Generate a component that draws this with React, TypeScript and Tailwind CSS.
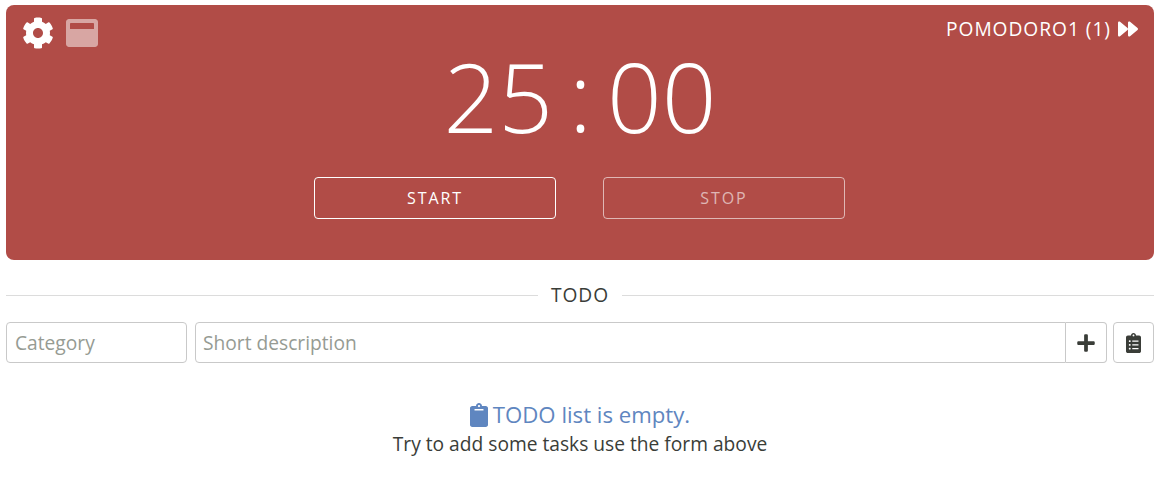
import { FaClipboard, FaClipboardList, FaCog, FaForward, FaPlus, FaWindowMaximize } from "react-icons/fa";

export default function App() {
  return (
    <div className="w-[1160px] h-[484px] bg-white px-[6px] pt-[5px] overflow-hidden font-['Open_Sans',sans-serif] text-[#3a3d38]">
      {/* Timer panel */}
      <div className="h-[255px] rounded-[8px] bg-[#b14c47] text-white px-4 pt-3">
        <div className="flex items-start justify-between h-[36px]">
          <div className="flex items-center gap-[12px]">
            <FaCog className="w-[32px] h-[32px]" />
            <FaWindowMaximize className="w-[32px] h-[32px] opacity-50" />
          </div>
          <div className="flex items-center gap-[7px] text-[19.2px] tracking-[0.96px] leading-[24px]">
            <span>POMODORO1 (1)</span>
            <FaForward className="w-[20px] h-[20px]" />
          </div>
        </div>
        <div className="flex justify-center items-center h-[100px] mt-[-7px] text-[96px] font-light leading-none">
          <span>25</span>
          <span className="ml-[16px] mr-[15px] relative top-[-1px]">:</span>
          <span>00</span>
        </div>
        <div className="flex justify-center gap-[47px] mt-[31px] pr-[1px]">
          <button className="w-[242px] h-[42px] rounded-[4px] border border-white text-[16px] tracking-[1.9px]">
            START
          </button>
          <button className="w-[242px] h-[42px] rounded-[4px] border border-white/60 text-white/60 text-[16px] tracking-[1.9px]">
            STOP
          </button>
        </div>
      </div>

      {/* Divider */}
      <div className="flex items-center gap-[13px] mt-[23px] h-[24px]">
        <div className="flex-1 h-px bg-[#dcdcdc]" />
        <span className="text-[19.2px] tracking-[0.96px] leading-[24px]">TODO</span>
        <div className="flex-1 h-px bg-[#dcdcdc]" />
      </div>

      {/* Form */}
      <div className="flex mt-[15px] h-[41px] text-[19.2px]">
        <input
          placeholder="Category"
          className="w-[181px] h-full rounded-[4px] border border-[#c9c9c9] px-2 outline-none placeholder:text-[#969b93]"
        />
        <div className="flex flex-1 ml-[8px]">
          <input
            placeholder="Short description"
            className="flex-1 min-w-0 h-full rounded-l-[4px] border border-[#c9c9c9] pl-[7px] pr-2 outline-none placeholder:text-[#969b93]"
          />
          <button className="w-[41px] h-full flex items-center justify-center rounded-r-[4px] border border-l-0 border-[#c9c9c9]">
            <FaPlus className="w-[20px] h-[20px]" />
          </button>
        </div>
        <button className="w-[41px] h-full ml-[6px] flex items-center justify-center rounded-[4px] border border-[#c9c9c9]">
          <FaClipboardList className="w-[15px] h-[20px]" />
        </button>
      </div>

      {/* Empty state */}
      <div className="flex flex-col items-center mt-[37px]">
        <div className="flex items-center gap-[5px] text-[22.2px] leading-[30px] text-[#5f86c0]">
          <FaClipboard className="w-[18px] h-[24px]" />
          <span>TODO list is empty.</span>
        </div>
        <p className="text-[19.2px] leading-[28px]">Try to add some tasks use the form above</p>
      </div>
    </div>
  );
}
